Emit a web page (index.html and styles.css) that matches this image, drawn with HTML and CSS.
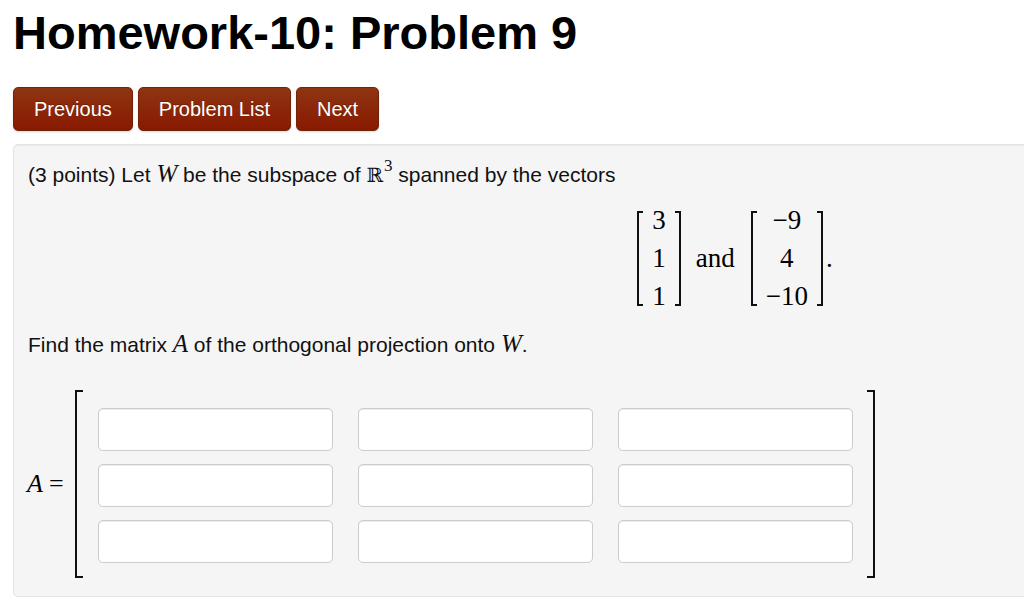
FILE: index.html
```html
<!DOCTYPE html>
<html lang="en">
<head>
<meta charset="utf-8">
<title>Homework-10: Problem 9</title>
<link rel="stylesheet" href="styles.css">
</head>
<body>
<div class="page">
  <h1 class="title">Homework-10: Problem 9</h1>
  <div class="nav">
    <a class="btn" href="#">Previous</a>
    <a class="btn" href="#">Problem List</a>
    <a class="btn" href="#">Next</a>
  </div>
  <div class="well">
    <p class="intro">(3 points) Let <span class="mi">W</span> be the subspace of <span class="ds">ℝ</span><sup class="sup">3</sup> spanned by the vectors</p>
    <div class="display">
      <span class="vec">
        <span class="br br-l"></span>
        <span class="col"><span class="cell">3</span><span class="cell">1</span><span class="cell">1</span></span>
        <span class="br br-r"></span>
      </span>
      <span class="and">and</span>
      <span class="vec">
        <span class="br br-l"></span>
        <span class="col"><span class="cell">−9</span><span class="cell">4</span><span class="cell">−10</span></span>
        <span class="br br-r"></span>
      </span>
      <span class="dot">.</span>
    </div>
    <p class="find">Find the matrix <span class="mi">A</span> of the orthogonal projection onto <span class="mi">W</span>.</p>
    <div class="matrix-row">
      <span class="lhs"><span class="mi-big">A</span><span class="eq">=</span></span>
      <span class="mbr mbr-l"></span>
      <div class="grid">
        <input class="cellinput" type="text">
        <input class="cellinput" type="text">
        <input class="cellinput" type="text">
        <input class="cellinput" type="text">
        <input class="cellinput" type="text">
        <input class="cellinput" type="text">
        <input class="cellinput" type="text">
        <input class="cellinput" type="text">
        <input class="cellinput" type="text">
      </div>
      <span class="mbr mbr-r"></span>
    </div>
  </div>
</div>
</body>
</html>
```
FILE: styles.css
```css
html, body {
  margin: 0;
  padding: 0;
  background: #ffffff;
  overflow: hidden;
}
body {
  font-family: "Liberation Sans", Arial, sans-serif;
  color: #111;
}
.page {
  padding: 0 0 0 13px;
}
.title {
  margin: 0;
  padding-top: 5px;
  font-size: 47px;
  font-weight: bold;
  line-height: normal;
  color: #000;
}
.nav {
  display: flex;
  gap: 5px;
  margin-top: 27px;
}
.btn {
  display: flex;
  align-items: center;
  height: 42px;
  padding: 0 20px;
  border: 1px solid #74230b;
  border-radius: 5px;
  background: linear-gradient(#8e3512, #891900);
  color: #fff;
  font-size: 20px;
  text-decoration: none;
  text-shadow: 0 -1px 0 rgba(0,0,0,0.25);
  box-shadow: 0 1px 2px rgba(0,0,0,0.15);
}
.well {
  width: 1414px;
  margin-top: 13px;
  padding: 14px 14px 18px;
  background: #f5f5f5;
  border: 1px solid #e3e3e3;
  border-radius: 5px;
  box-shadow: inset 0 1px 1px rgba(0,0,0,0.05);
  font-size: 21px;
}
.intro, .find {
  margin: 0;
  line-height: 30px;
}
.mi {
  font-family: "Liberation Serif", "Times New Roman", serif;
  font-style: italic;
  font-size: 25px;
}
.ds {
  font-family: "DejaVu Serif", serif;
  font-size: 20px;
}
.sup {
  font-family: "Liberation Serif", serif;
  font-size: 17px;
  vertical-align: 0;
  position: relative;
  top: -11px;
  margin-left: 1px;
}
.display {
  display: flex;
  justify-content: center;
  align-items: center;
  margin: 19px 0 23px;
  font-family: "Liberation Serif", "Times New Roman", serif;
  font-size: 27px;
  color: #000;
}
.vec {
  display: flex;
  align-items: stretch;
}
.br {
  width: 4px;
  border: 2px solid #111;
}
.br-l { border-right: none; }
.br-r { border-left: none; }
.col {
  display: flex;
  flex-direction: column;
  gap: 19px;
  padding: 0 9px;
  text-align: center;
}
.cell {
  line-height: 19px;
  height: 19px;
}
.and {
  margin: 0 16px 0 15px;
}
.dot {
  margin-left: 3px;
}
.matrix-row {
  display: flex;
  align-items: center;
  margin-top: 30px;
}
.lhs {
  display: flex;
  align-items: center;
  font-family: "Liberation Serif", "Times New Roman", serif;
  font-size: 26px;
  color: #000;
  width: 47px;
}
.mi-big {
  font-style: italic;
  margin-left: -1px;
}
.eq {
  margin-left: 6px;
}
.mbr {
  align-self: stretch;
  width: 6px;
  border: 2px solid #111;
}
.mbr-l { border-right: none; }
.mbr-r { border-left: none; }
.grid {
  display: grid;
  grid-template-columns: repeat(3, 235px);
  column-gap: 25px;
  row-gap: 13px;
  padding: 18px 14px 15px 15px;
}
.cellinput {
  box-sizing: border-box;
  width: 235px;
  height: 43px;
  margin: 0;
  border: 1px solid #cccccc;
  border-radius: 5px;
  background: #fff;
  box-shadow: inset 0 1px 1px rgba(0,0,0,0.075);
  font-size: 20px;
}
```
